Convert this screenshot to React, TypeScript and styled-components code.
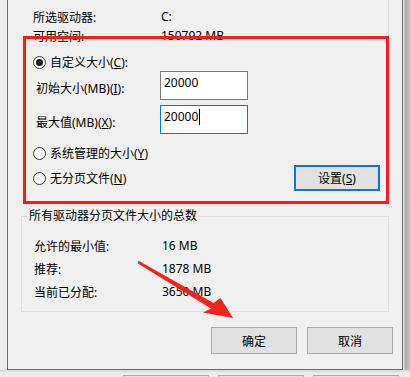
import styled, { createGlobalStyle } from "styled-components";

const GlobalStyle = createGlobalStyle`
  *, *::before, *::after {
    box-sizing: border-box;
  }
  html, body {
    margin: 0;
    padding: 0;
    background: #ececec;
  }
  body {
    font-family: "Noto Sans", "Noto Sans CJK SC", sans-serif;
    font-size: 12px;
    color: #000;
  }
`;

const Page = styled.div`
  position: relative;
  width: 410px;
  height: 377px;
  overflow: hidden;
  background: #ececec;
  display: flex;
  flex-direction: column;
`;

const Stage = styled.div`
  display: flex;
  padding-left: 7px;
`;

const Dialog = styled.div`
  width: 396px;
  background: #f0f0f0;
  border: 1px solid #6b6b6b;
  border-top: none;
  display: flex;
  flex-direction: column;
  padding-bottom: 15px;
`;

const Backdrop = styled.div`
  flex: 1;
  background: linear-gradient(to right, #e4e4e4 0, #e4e4e4 1px, #a9a9a9 2px, #c4c4c4 100%);
`;

const BehindStrip = styled.div`
  flex: 1;
  display: flex;
  align-items: flex-start;
  gap: 9px;
  padding: 5px 0 0 123px;
  background: linear-gradient(to bottom, #d6d6d6 0, #ececec 3px);
`;

const GhostButton = styled.div`
  flex: none;
  width: 86px;
  height: 20px;
  background: #e1e1e1;
  border: 1px solid #adadad;
`;

const DriveGroup = styled.div`
  margin-left: 15px;
  width: 366px;
  display: flex;
  flex-direction: column;
`;

const InfoList = styled.div`
  padding: 7px 0 0 10px;
  border-right: 1px solid #dcdcdc;
`;

const Row = styled.div<{ $h: number; $indent?: number }>`
  display: flex;
  align-items: center;
  height: ${(p) => p.$h}px;
  padding-left: ${(p) => p.$indent ?? 0}px;
  white-space: nowrap;
`;

const Label = styled.span`
  flex: none;
  width: 128px;
`;

const Highlight = styled.div`
  position: relative;
  margin-top: -9px;
  border: 3px solid #f41d1a;
  padding: 14px 6px 10px 7px;
  display: flex;
  flex-direction: column;
`;

const RadioRow = styled.label<{ $mt?: number }>`
  display: flex;
  align-items: center;
  height: 18px;
  margin-top: ${(p) => p.$mt ?? 0}px;
  white-space: nowrap;
`;

const RadioCircle = styled.span<{ $on?: boolean }>`
  flex: none;
  width: 13px;
  height: 13px;
  margin-right: 4px;
  border-radius: 50%;
  border: 1px solid #333;
  background: #fff;
  display: flex;
  align-items: center;
  justify-content: center;
  &::after {
    content: "";
    display: ${(p) => (p.$on ? "block" : "none")};
    width: 7px;
    height: 7px;
    border-radius: 50%;
    background: #1a1a1a;
  }
`;

const FieldRow = styled.div<{ $mt?: number }>`
  display: flex;
  align-items: center;
  height: 29px;
  margin-top: ${(p) => p.$mt ?? 0}px;
`;

const FieldLabel = styled.span`
  flex: none;
  width: 124px;
  margin-left: 3px;
  padding-top: 5px;
  white-space: nowrap;
`;

const TextBox = styled.div<{ $focused?: boolean }>`
  width: 88px;
  height: 29px;
  background: #fff;
  border: 1px solid ${(p) => (p.$focused ? "#0078d7" : "#7a7a7a")};
  padding: 3px 3px;
  line-height: 16px;
  display: flex;
  align-items: flex-start;
`;

const Caret = styled.span`
  display: inline-block;
  width: 1px;
  height: 16px;
  background: #000;
  margin-left: 1px;
`;

const LastRow = styled.div`
  display: flex;
  align-items: center;
  justify-content: space-between;
  height: 26px;
  margin-top: 3px;
`;

const Button = styled.div<{ $default?: boolean }>`
  flex: none;
  width: 86px;
  height: ${(p) => (p.$default ? 26 : 27)}px;
  background: #e1e1e1;
  border: ${(p) => (p.$default ? "2px solid #0078d7" : "1px solid #adadad")};
  display: flex;
  align-items: center;
  justify-content: center;
  white-space: nowrap;
`;

const TotalsGroup = styled.fieldset`
  margin: 4px 0 0 13px;
  width: 368px;
  min-width: 0;
  border: 1px solid #dcdcdc;
  padding: 10px 0 8px 0;
`;

const Legend = styled.legend`
  margin-left: 6px;
  padding: 0 1px;
  font-size: 12px;
  line-height: 16px;
`;

const ButtonBar = styled.div`
  display: flex;
  justify-content: flex-end;
  gap: 10px;
  margin-top: 15px;
  padding-right: 9px;
`;

const Overlay = styled.svg`
  position: absolute;
  left: 0;
  top: 0;
  pointer-events: none;
`;

const totals = [
  { label: "允许的最小值:", value: "16 MB" },
  { label: "推荐:", value: "1878 MB" },
  { label: "当前已分配:", value: "3650 MB" },
];

export default function App() {
  return (
    <Page>
      <GlobalStyle />
      <Stage>
        <Dialog>
          <DriveGroup>
            <InfoList>
              <Row $h={19}>
                <Label>所选驱动器:</Label>
                <span>C:</span>
              </Row>
              <Row $h={19}>
                <Label>可用空间:</Label>
                <span>150792 MB</span>
              </Row>
            </InfoList>
            <Highlight>
              <RadioRow>
                <RadioCircle $on />
                <span>
                  自定义大小(<u>C</u>):
                </span>
              </RadioRow>
              <FieldRow>
                <FieldLabel>
                  初始大小(MB)(<u>I</u>):
                </FieldLabel>
                <TextBox>20000</TextBox>
              </FieldRow>
              <FieldRow $mt={5}>
                <FieldLabel>
                  最大值(MB)(<u>X</u>):
                </FieldLabel>
                <TextBox $focused>
                  20000
                  <Caret />
                </TextBox>
              </FieldRow>
              <RadioRow $mt={10}>
                <RadioCircle />
                <span>
                  系统管理的大小(<u>Y</u>)
                </span>
              </RadioRow>
              <LastRow>
                <RadioRow>
                  <RadioCircle />
                  <span>
                    无分页文件(<u>N</u>)
                  </span>
                </RadioRow>
                <Button $default>
                  设置(<u>S</u>)
                </Button>
              </LastRow>
            </Highlight>
          </DriveGroup>

          <TotalsGroup>
            <Legend>所有驱动器分页文件大小的总数</Legend>
            {totals.map((t) => (
              <Row key={t.label} $h={23} $indent={12}>
                <Label>{t.label}</Label>
                <span>{t.value}</span>
              </Row>
            ))}
          </TotalsGroup>

          <ButtonBar>
            <Button>确定</Button>
            <Button>取消</Button>
          </ButtonBar>
        </Dialog>
        <Backdrop />
      </Stage>
      <BehindStrip>
        <GhostButton />
        <GhostButton />
        <GhostButton />
      </BehindStrip>

      <Overlay width={410} height={377} viewBox="0 0 410 377">
        <polygon
          points="138.5,260.8 213.5,303 220.5,298 233,318 203,312.5 211,308.5 137.5,263.2"
          fill="#f5221b"
        />
      </Overlay>
    </Page>
  );
}
